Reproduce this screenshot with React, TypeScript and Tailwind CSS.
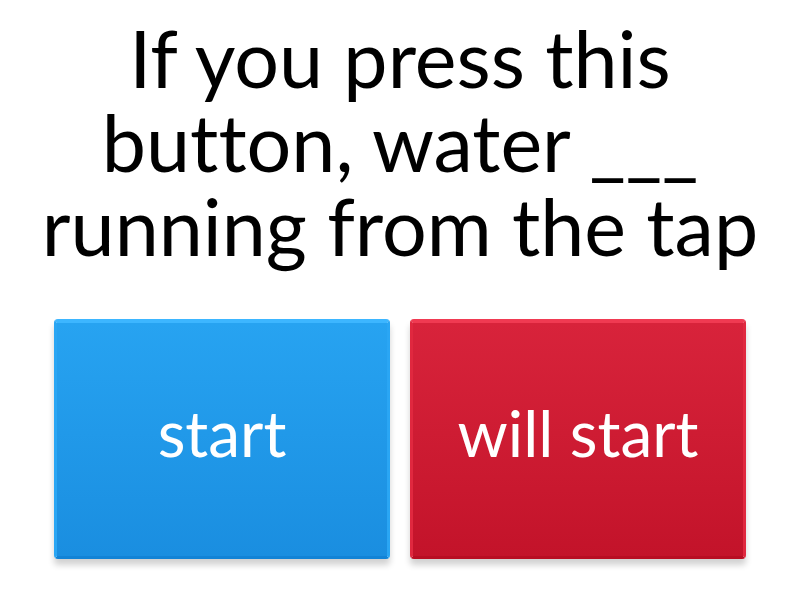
export default function App() {
  return (
    <div className="w-[800px] h-[600px] bg-white flex flex-col items-center [font-variant-ligatures:none]" style={{ fontFamily: 'Lato, "Noto Sans", sans-serif' }}>
      <div className="h-[300px] w-full flex items-center justify-center">
        <h1 className="text-[79px] leading-[84px] text-black text-center font-normal mt-[-16px]">
          If you press this<br />button, water ___<br />running from the tap
        </h1>
      </div>
      <div className="flex gap-5 mt-[19px]">
        <Answer label="start" tone="blue" />
        <Answer label="will start" tone="red" />
      </div>
    </div>
  );
}

function Answer({ label, tone }: { label: string; tone: 'blue' | 'red' }) {
  const shell =
    tone === 'blue'
      ? 'border-t-[#3db6ff] border-x-[#2aa6f4] border-b-[#1283d6] bg-gradient-to-b from-[#27a3f1] to-[#1a8ee0]'
      : 'border-t-[#f03a52] border-x-[#e0283f] border-b-[#b80d22] bg-gradient-to-b from-[#d8233b] to-[#c3132a]';
  return (
    <div
      className={`w-[336px] h-[240px] rounded-[4px] border-t-4 border-x-[3px] border-b-[3px] flex items-center justify-center pb-[14px] shadow-[0_6px_6px_rgba(0,0,0,0.18)] ${shell}`}
    >
      <span className="text-white text-[64px] leading-none">{label}</span>
    </div>
  );
}
